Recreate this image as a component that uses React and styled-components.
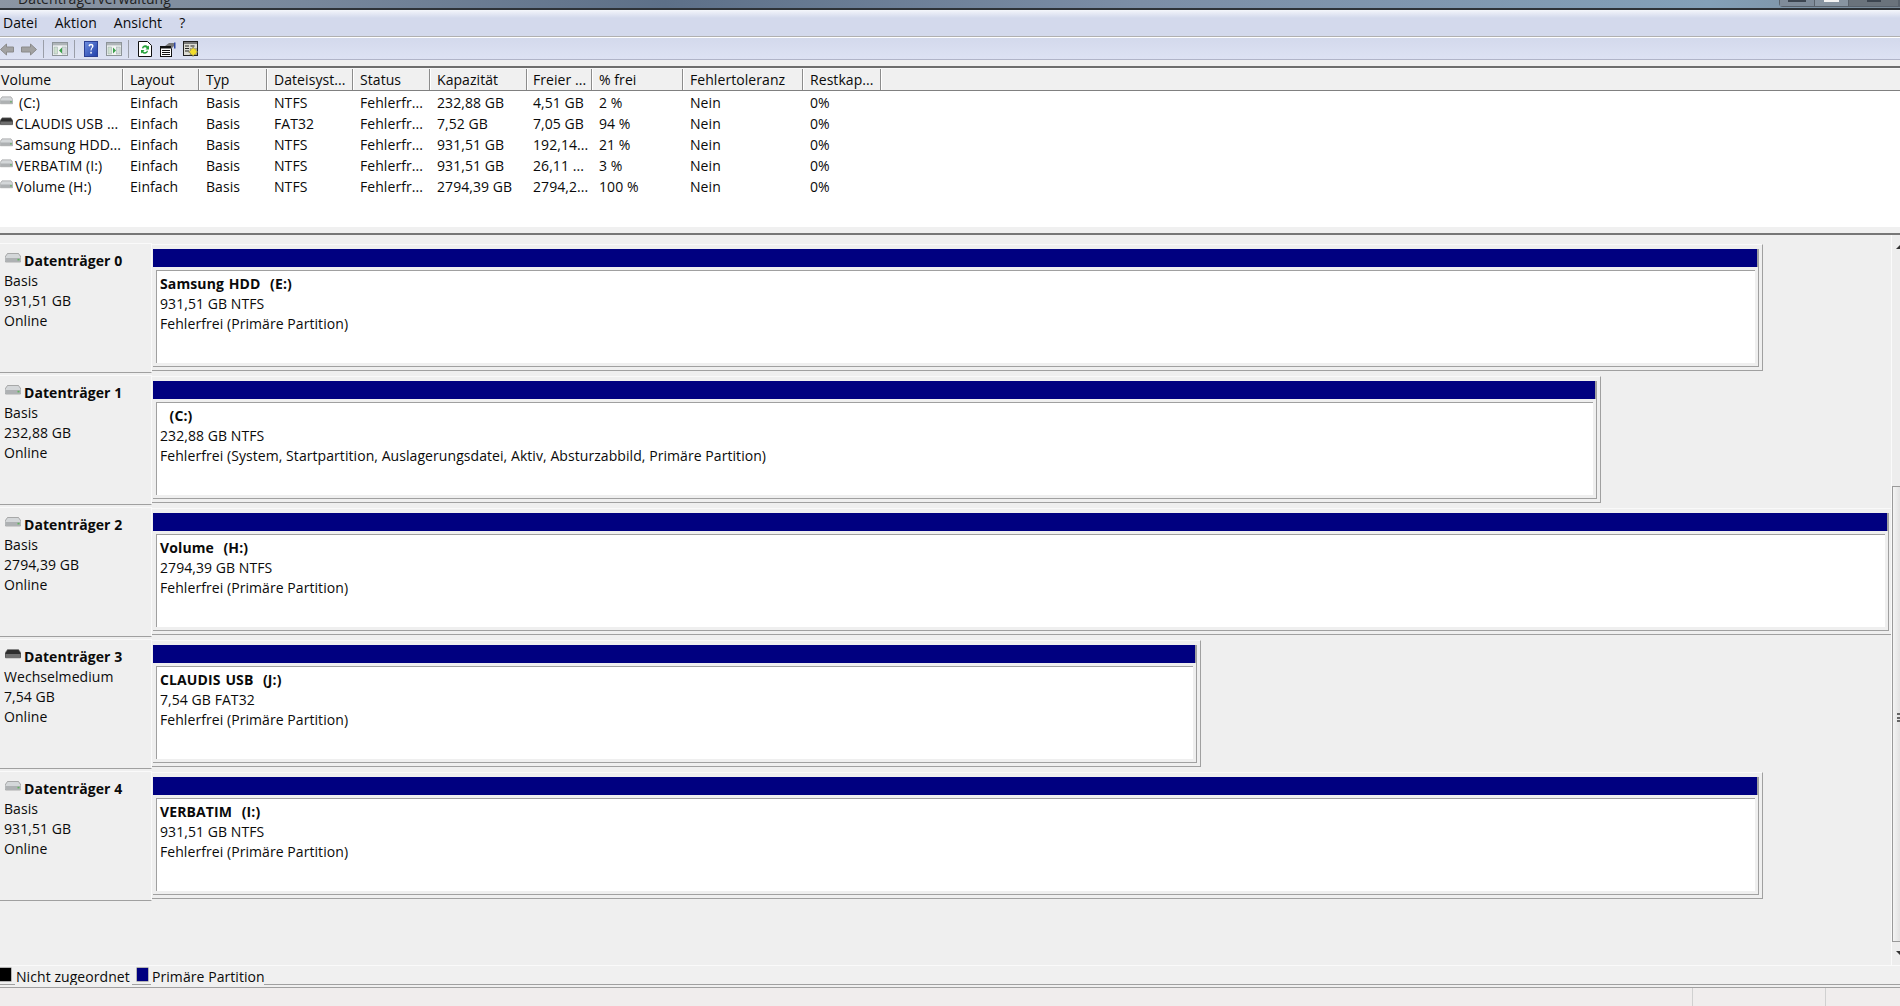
import React from "react";
import styled, { createGlobalStyle } from "styled-components";

const Global = createGlobalStyle`
  html, body { margin: 0; padding: 0; background: #f0f0f0; overflow: hidden; }
  body { font-family: "Open Sans", "Noto Sans", sans-serif; font-size: 14px; letter-spacing: .065px; color: #0a0a0a; }
`;
const Win = styled.div`width: 1900px; height: 1006px; display: flex; flex-direction: column; overflow: hidden;`;
const TitleBar = styled.div`
  height: 8px; flex: none; display: flex; justify-content: space-between; overflow: hidden; padding-left: 18px;
  background: linear-gradient(90deg, #8c96a3 0%, #78889c 16%, #5d7088 35%, #7c8ea6 60%, #83a0b8 90%, #7a8a98 100%);
  border-bottom: 2px solid #2e3338;
`;
const TitleText = styled.span`font-size: 14px; line-height: 14px; margin-top: -8px; color: #222;`;
const WinButtons = styled.div`display: flex; height: 6px; border: 1px solid #59626c; border-top: 0; border-radius: 0 0 0 4px;`;
const WinBtn = styled.div`width: ${p => p.$w}px; height: 6px; display: flex; justify-content: center; border-right: 1px solid #59626c; background: ${p => p.$bg};`;
const WinGlyph = styled.div`width: ${p => p.$w}px; height: 2px; background: ${p => p.$c};`;
const MenuBar = styled.div`
  height: 26px; flex: none; display: flex; align-items: center; padding: 0 0 0 3px; gap: 17px;
  background: linear-gradient(#f4f6fb 0, #d3d9ec 8px, #d3d9ec 100%);
  border-bottom: 1px solid #b0b0b0;
`;
const MenuItem = styled.span`line-height: 20px;`;
const ToolBar = styled.div`
  height: 20px; padding-top: 1px; flex: none; display: flex; align-items: center;
  background: linear-gradient(#d3d9ec, #dde2f3);
  border-top: 1px solid #fff; border-bottom: 1px solid #b0b4c8;
`;
const ToolIcon = styled.svg`display: block; flex: none; margin-left: ${p => p.$ml}px;`;
const ToolSep = styled.div`width: 1px; height: 18px; flex: none; background: #9a9ea8; margin-left: ${p => p.$ml}px;`;
const Gap = styled.div`height: 6px; flex: none; background: #f0f0f0;`;
const ListPane = styled.div`
  height: 167px; flex: none; box-sizing: border-box; display: flex; flex-direction: column; background: #fff;
  border-top: 2px solid #6e6e6e;
`;
const HeaderRow = styled.div`
  flex: none; display: flex; background: #f0f0f0; height: 21px;
  border-top: 1px solid #f8f8f8; border-bottom: 1px solid #808080;
`;
const HeaderCell = styled.div`
  width: ${p => p.$w}px; flex: none; box-sizing: border-box; padding: 1px 0 0 ${p => p.$pl}px; line-height: 20px; white-space: nowrap;
  border-right: 1px solid #8c8c8c; box-shadow: 1px 0 0 #fff;
`;
const Row = styled.div`height: 21px; flex: none; display: flex; background: #fff;`;
const Rows = styled.div`flex: 1; padding-top: 1px; min-height: 0;`;
const Cell = styled.div`
  width: ${p => p.$w}px; flex: none; box-sizing: border-box; padding-left: ${p => p.$pl}px; line-height: 21px; white-space: nowrap; display: flex; align-items: center;
`;
const DriveName = styled.span`margin-left: ${p => p.$ml}px;`;
const DriveSvg = styled.svg`display: block; flex: none; margin-top: -5px;`;
const ListBottom = styled.div`height: 6px; flex: none; background: #f0f0f0;`;
const Splitter = styled.div`height: 2px; flex: none; background: #777;`;
const Middle = styled.div`height: 730px; flex: none; display: flex; min-height: 0; background: #efefef;`;
const Disks = styled.div`width: 1891px; flex: none; padding-top: 8px; box-sizing: border-box;`;
const DiskRow = styled.div`display: flex; height: 132px; box-sizing: border-box;`;
const DiskLabel = styled.div`
  width: 152px; flex: none; height: 130px; box-sizing: border-box; padding: 6px 0 0 4px; line-height: 20px;
  border-top: 1px solid #fafafa; border-bottom: 1px solid #a0a0a0; border-right: 1px solid #fafafa; box-shadow: inset -3px 0 0 #efefef;
`;
const DiskName = styled.div`display: flex; font-weight: 700; align-items: center; height: 22px; margin-bottom: -1px;`;
const DiskIcon = styled.svg`display: block; flex: none; margin: -7px 3px 0 1px;`;
const Outer = styled.div`
  width: ${p => p.$w}px; height: 127px; flex: none; box-sizing: border-box; margin-top: 1px;
  border-right: 1px solid #a0a0a0; border-bottom: 1px solid #a0a0a0; border-top: 1px solid #f9f9f9;
  padding: 4px 3px 3px 1px;
`;
const Inner = styled.div`
  height: 100%; box-sizing: border-box; display: flex; flex-direction: column;
  border-right: 1px solid #a0a0a0; border-bottom: 1px solid #a0a0a0;
`;
const Bar = styled.div`height: 18px; flex: none; background: #000080; box-shadow: inset -1px 0 0 #a0a0a0;`;
const Content = styled.div`
  flex: 1; margin: 3px; background: #fff; min-height: 0; box-sizing: border-box;
  border-left: 1px solid #a0a0a0; border-top: 1px solid #a0a0a0; padding: 3px 0 0 3px; line-height: 20px;
`;
const VolName = styled.div`font-weight: 700; white-space: pre; letter-spacing: .12px; word-spacing: 1px;`;
const VolLine = styled.div`white-space: nowrap;`;
const Scroll = styled.div`
  width: 9px; flex: none; position: relative; background: #ededed; border-left: 1px solid #fafafa; box-sizing: border-box;
`;
const ScrollBtn = styled.div`
  position: absolute; left: 4px; width: 0; height: 0; top: ${p => p.$top}px;
  border-left: 4px solid transparent; ${p => p.$up ? "border-bottom: 4px solid #333;" : "border-top: 4px solid #333;"}
`;
const Thumb = styled.div`
  position: absolute; left: 0; right: 0; top: 251px; height: 456px; background: linear-gradient(90deg, #f4f4f4, #e2e2e2); border: 1px solid #9a9a9a; border-right: 0; box-sizing: border-box;
`;
const Grip = styled.div`position: absolute; left: 4px; right: 0; top: 226px; height: 9px; border-top: 2px solid #666; border-bottom: 2px solid #666; box-sizing: border-box; &::after { content: ""; display: block; height: 2px; margin-top: 1.5px; background: #666; }`;
const Legend = styled.div`
  height: 20px; flex: none; display: flex; box-sizing: border-box; background: #f0f0f0;
  border-top: 1px solid #fafafa;
`;
const LegendFill = styled.div`flex: 1; border-bottom: 1px solid #a0a0a0;`;
const LegendSwatchBox = styled.div`width: ${p => p.$w}px; flex: none; box-sizing: border-box; padding: 2px 0 0 ${p => p.$pl}px; height: 100%; border-bottom: 1px solid #a0a0a0;`;
const Swatch = styled.div`width: 11px; height: 13px; background: ${p => p.$c}; box-shadow: 0 0 0 0.5px #777;`;
const LegendText = styled.span`flex: none; line-height: 20px; width: ${p => p.$w}px; white-space: nowrap; padding: 1px 0 0 1px; box-sizing: border-box;`;
const LegendGap = styled.div`height: 2px; flex: none; background: #f0f0f0; border-bottom: 1px solid #a0a0a0;`;
const Status = styled.div`flex: 1; display: flex; background: #f0eded; justify-content: flex-end;`;
const StatusCell = styled.div`width: ${p => p.$w}px; flex: none; box-sizing: border-box; border-left: 1px solid #d0d0d0;`;

const cols = [
  ["Volume", 123, 1], ["Layout", 76, 7], ["Typ", 68, 7], ["Dateisyst...", 86, 7], ["Status", 77, 7],
  ["Kapazität", 97, 7], ["Freier ...", 65, 6], ["% frei", 91, 7], ["Fehlertoleranz", 120, 7], ["Restkap...", 78, 7],
];
const rows = [
  ["(C:)", "Einfach", "Basis", "NTFS", "Fehlerfr...", "232,88 GB", "4,51 GB", "2 %", "Nein", "0%"],
  ["CLAUDIS USB ...", "Einfach", "Basis", "FAT32", "Fehlerfr...", "7,52 GB", "7,05 GB", "94 %", "Nein", "0%"],
  ["Samsung HDD...", "Einfach", "Basis", "NTFS", "Fehlerfr...", "931,51 GB", "192,14...", "21 %", "Nein", "0%"],
  ["VERBATIM (I:)", "Einfach", "Basis", "NTFS", "Fehlerfr...", "931,51 GB", "26,11 ...", "3 %", "Nein", "0%"],
  ["Volume (H:)", "Einfach", "Basis", "NTFS", "Fehlerfr...", "2794,39 GB", "2794,2...", "100 %", "Nein", "0%"],
];
const disks = [
  { n: "Datenträger 0", t: "Basis", s: "931,51 GB", v: "Samsung HDD  (E:)", fs: "931,51 GB NTFS", st: "Fehlerfrei (Primäre Partition)", w: 1611 },
  { n: "Datenträger 1", t: "Basis", s: "232,88 GB", v: "  (C:)", fs: "232,88 GB NTFS", st: "Fehlerfrei (System, Startpartition, Auslagerungsdatei, Aktiv, Absturzabbild, Primäre Partition)", w: 1449 },
  { n: "Datenträger 2", t: "Basis", s: "2794,39 GB", v: "Volume  (H:)", fs: "2794,39 GB NTFS", st: "Fehlerfrei (Primäre Partition)", w: 1741 },
  { n: "Datenträger 3", t: "Wechselmedium", s: "7,54 GB", v: "CLAUDIS USB  (J:)", fs: "7,54 GB FAT32", st: "Fehlerfrei (Primäre Partition)", w: 1049, usb: true },
  { n: "Datenträger 4", t: "Basis", s: "931,51 GB", v: "VERBATIM  (I:)", fs: "931,51 GB NTFS", st: "Fehlerfrei (Primäre Partition)", w: 1611 },
];

const DriveShape = ({ usb }) => (
  <>
    <path d="M2.500 .5h11L16 4v4a1 1 0 0 1-1 1H1a1 1 0 0 1-1-1V4z" fill={usb ? "#2e2e2e" : "#d4d7d9"} stroke="#808080" strokeWidth=".6" />
    <path d="M.5 5h15v3a1 1 0 0 1-1 1h-13a1 1 0 0 1-1-1z" fill={usb ? "#6f6f6f" : "#aeb1b3"} />
    {!usb && <rect x="12.500" y="5.800" width="2" height="1.600" fill="#5fb35f" />}
  </>
);
const Drive = ({ usb }) => (
  <DriveSvg width={13} height={9} viewBox="0 0 16 10"><DriveShape usb={usb} /></DriveSvg>
);
const WinIcon = ({ ml, dir }) => (
  <ToolIcon $ml={ml} width="16" height="14" viewBox="0 0 16 14">
    <rect x=".5" y=".5" width="15" height="13" fill="#f2f4f4" stroke="#8d9498" />
    <rect x="1" y="1" width="14" height="2.400" fill="#aeb4b8" />
    <rect x="2" y="5" width="3.600" height="7" fill="#cfe0cf" stroke="#9aa" strokeWidth=".5" />
    <rect x="10.500" y="5" width="3.600" height="7" fill="#d6dcdc" stroke="#9aa" strokeWidth=".5" />
    <path d={dir === "l" ? "M10 5.500v6l-3-3z" : "M7 5.500v6l3-3z"} fill="#3aa04a" />
  </ToolIcon>
);

export default function App() {
  return (
    <Win>
      <Global />
      <TitleBar>
        <TitleText>Datenträgerverwaltung</TitleText>
        <WinButtons>
          <WinBtn $w={34} $bg="#7f8c9a"><WinGlyph $w={18} $c="#3c4550" /></WinBtn>
          <WinBtn $w={33} $bg="#8794a1"><WinGlyph $w={15} $c="#f4f4f4" /></WinBtn>
          <WinBtn $w={49} $bg="#6a737c"><WinGlyph $w={14} $c="#3c4550" /></WinBtn>
        </WinButtons>
      </TitleBar>
      <MenuBar>
        <MenuItem>Datei</MenuItem>
        <MenuItem>Aktion</MenuItem>
        <MenuItem>Ansicht</MenuItem>
        <MenuItem>?</MenuItem>
      </MenuBar>
      <ToolBar>
        <ToolIcon $ml={0} width="14" height="13" viewBox="0 0 14 13">
          <path d="M.5 6.500L6.500 1v3h7v5h-7v3z" fill="#a2a2a2" stroke="#8a8a8a" />
        </ToolIcon>
        <ToolIcon $ml={7} width="16" height="13" viewBox="0 0 16 13">
          <path d="M15.500 6.500L9.500 1v3h-9v5h9v3z" fill="#a2a2a2" stroke="#8a8a8a" />
        </ToolIcon>
        <ToolSep $ml={6} />
        <WinIcon ml={8} dir="l" />
        <ToolSep $ml={6} />
        <ToolIcon $ml={9} width="14" height="16" viewBox="0 0 14 16">
          <defs>
            <linearGradient id="h" x1="0" y1="0" x2="1" y2="1"><stop offset="0" stopColor="#6f8fe0" /><stop offset="1" stopColor="#1f3ea8" /></linearGradient>
          </defs>
          <rect x=".5" y=".5" width="13" height="15" fill="url(#h)" stroke="#2b3f93" />
          <path d="M4.500 5c0-3 5-3 5 0 0 2-2 2-2 4.500H6.500C6.500 7 8 7 8 5c0-1-2-1-2 .5z" fill="#fff" />
          <rect x="6.300" y="10.800" width="1.500" height="1.800" fill="#fff" />
        </ToolIcon>
        <WinIcon ml={8} dir="r" />
        <ToolSep $ml={6} />
        <ToolIcon $ml={9} width="14" height="16" viewBox="0 0 14 16">
          <path d="M.5.500h9l4 4v11H.5z" fill="#fff" stroke="#111" />
          <path d="M4 6.500a3.500 3.500 0 0 1 6-1l1-1v4H7.500l1.200-1.200A2 2 0 0 0 5 8z" fill="#25a23a" />
          <path d="M10 10.500a3.500 3.500 0 0 1-6 1l-1 1V9h3.500L5.300 10.200A2 2 0 0 0 9 9.300z" fill="#25a23a" />
        </ToolIcon>
        <ToolIcon $ml={8} width="16" height="15" viewBox="0 0 16 15">
          <rect x=".5" y="4.500" width="11" height="10" fill="#fff" stroke="#111" />
          <path d="M0 4h12v2.500H0zM2 8h8v1H2zM2 10h8v1H2zM2 12h8v1H2z" fill="#111" />
          <path d="M5 4l4-3h5v3l-3 3V4z" fill="#777" />
          <rect x="14" y=".5" width="1.500" height="6" fill="#3148a5" />
        </ToolIcon>
        <ToolIcon $ml={7} width="16" height="16" viewBox="0 0 16 16">
          <rect x=".5" y=".5" width="14" height="14" fill="#dcdcd4" stroke="#222" />
          <rect x="1" y="1" width="13" height="2" fill="#777" />
          <path d="M2 4.500h4v1H2zM2 7h4v1H2zM2 9.500h4v1H2zM7.500 4.500h4v1h-4z" fill="#222" />
          <path d="M10 6l1.500 2 2-.5-.5 2 2 1.500-2 1 .5 2-2-.5-1.500 2-1-2-2 .5.500-2-2-1 2-1.500-.5-2 2 .5z" fill="#f2dc2c" stroke="#555" strokeWidth=".5" />
        </ToolIcon>
      </ToolBar>
      <Gap />
      <ListPane>
        <HeaderRow>
          {cols.map(([t, w, pl]) => <HeaderCell key={t} $w={w} $pl={pl}>{t}</HeaderCell>)}
        </HeaderRow>
        <Rows>
          {rows.map((r, i) => (
            <Row key={r[0]}>
              {r.map((c, j) => (
                <Cell key={j} $w={cols[j][1]} $pl={j === 0 ? 0 : cols[j][2]}>
                  {j === 0 && <Drive usb={i === 1} />}
                  {j === 0 ? <DriveName $ml={i === 0 ? 6 : 2}>{c}</DriveName> : c}
                </Cell>
              ))}
            </Row>
          ))}
        </Rows>
        <ListBottom />
      </ListPane>
      <Splitter />
      <Middle>
        <Disks>
          {disks.map(d => (
            <DiskRow key={d.n}>
              <DiskLabel>
                <DiskName>
                  <DiskIcon width="16" height="10" viewBox="0 0 16 10"><DriveShape usb={d.usb} /></DiskIcon>
                  {d.n}
                </DiskName>
                <div>{d.t}</div>
                <div>{d.s}</div>
                <div>Online</div>
              </DiskLabel>
              <Outer $w={d.w}>
                <Inner>
                  <Bar />
                  <Content>
                    <VolName>{d.v}</VolName>
                    <VolLine>{d.fs}</VolLine>
                    <VolLine>{d.st}</VolLine>
                  </Content>
                </Inner>
              </Outer>
            </DiskRow>
          ))}
        </Disks>
        <Scroll>
          <ScrollBtn $up $top={10} />
          <Thumb><Grip /></Thumb>
          <ScrollBtn $top={716} />
        </Scroll>
      </Middle>
      <Legend>
        <LegendSwatchBox $w={15} $pl={0}><Swatch $c="#000" /></LegendSwatchBox>
        <LegendText $w={117}>Nicht zugeordnet</LegendText>
        <LegendSwatchBox $w={19} $pl={5}><Swatch $c="#000080" /></LegendSwatchBox>
        <LegendText $w={113}>Primäre Partition</LegendText>
        <LegendFill />
      </Legend>
      <LegendGap />
      <Status>
        <StatusCell $w={133} />
        <StatusCell $w={75} />
      </Status>
    </Win>
  );
}
